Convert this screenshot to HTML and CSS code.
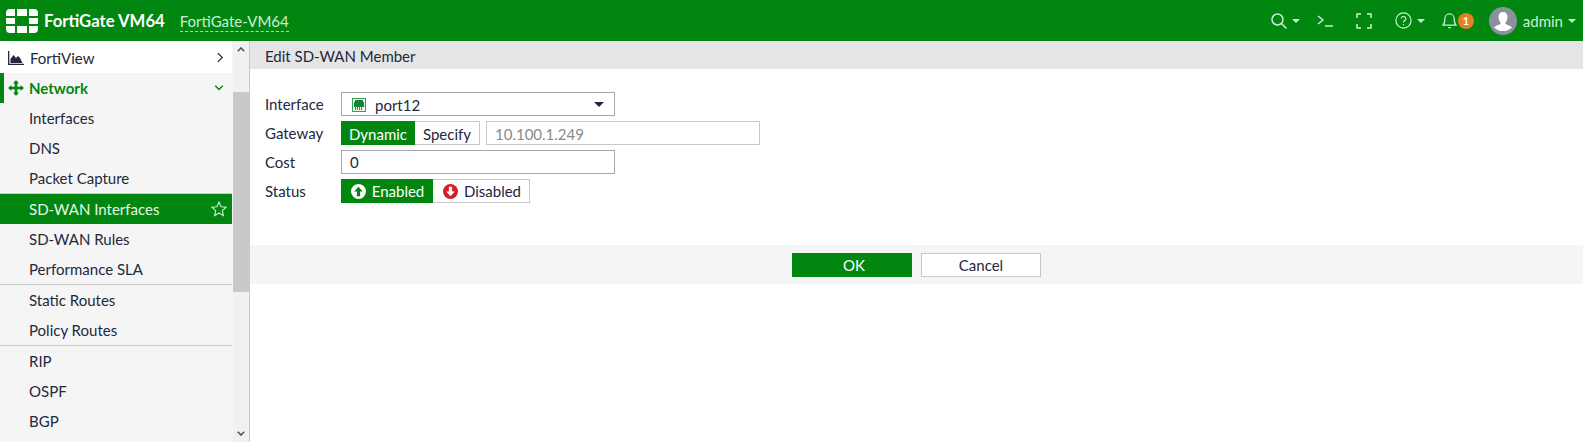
FILE: index.html
```html
<!DOCTYPE html>
<html lang="en">
<head>
<meta charset="utf-8">
<title>Edit SD-WAN Member</title>
<link rel="stylesheet" href="styles.css">
</head>
<body>
<header class="topbar">
  <svg class="logo" viewBox="0 0 32 24"><g fill="#fff"><path d="M0 7V4a4 4 0 0 1 4-4h5v7z"/><rect x="11" y="0" width="10" height="7"/><path d="M23 0h5a4 4 0 0 1 4 4v3h-9z"/><rect x="0" y="9" width="9" height="6"/><rect x="23" y="9" width="9" height="6"/><path d="M0 17h9v7H4a4 4 0 0 1-4-4z"/><rect x="11" y="17" width="10" height="7"/><path d="M23 17h9v3a4 4 0 0 1-4 4h-5z"/></g></svg>
  <span class="product">FortiGate VM64</span>
  <span class="hostname">FortiGate-VM64</span>
  <div class="tools">
    <svg class="tool search" viewBox="0 0 16 16"><circle cx="6.500" cy="6.500" r="5.500"/><path d="M10.500 10.500L15.500 15.500"/></svg>
    <i class="caret"></i>
    <svg class="tool prompt" viewBox="0 0 16 12"><path d="M1 1l5 4-5 4M8 11h8"/></svg>
    <svg class="tool full" viewBox="0 0 16 16"><path d="M1 5V1h4M11 1h4v4M15 11v4h-4M5 15H1v-4"/></svg>
    <svg class="tool help" viewBox="0 0 18 18"><circle cx="9" cy="9" r="8"/><path d="M6.600 7a2.400 2.400 0 1 1 3.600 2.100c-.8.500-1.200 1-1.200 1.900M9 12.600v1.400"/></svg>
    <i class="caret"></i>
    <svg class="tool bell" viewBox="0 0 16 18"><path d="M1 14c2-2 2-3.500 2-7a5 5 0 0 1 10 0c0 3.500 0 5 2 7zM6.500 16.500h3"/></svg>
    <span class="badge">1</span>
    <svg class="avatar" viewBox="0 0 28 28"><circle cx="14" cy="14" r="14" fill="#8a919c"/><path fill="#fff" d="M14 5c3 0 4.500 2 4.500 5 0 2.500-1 4.500-2 5.500v1.500c2 1 5 1.500 6.500 3.500a13 13 0 0 1-18 0c1.500-2 4.500-2.500 6.500-3.500v-1.500c-1-1-2-3-2-5.500 0-3 1.500-5 4.500-5z"/></svg>
    <span class="user">admin</span>
    <i class="caret"></i>
  </div>
</header>
<div class="shell">
  <nav class="sidebar">
    <div class="menu">
      <a class="item item-top">
        <svg class="ico" viewBox="0 0 16 14"><path d="M.7 0v13.300H16" fill="none" stroke="#23283c" stroke-width="1.300"/><path fill="#23283c" d="M2.500 12V8l3-4 2.500 3 2-2 2 2 2.500 5z"/></svg>
        <span class="grow">FortiView</span>
        <svg class="chev" viewBox="0 0 8 12"><path d="M1 1l5 5-5 5"/></svg>
      </a>
      <a class="item item-open">
        <svg class="ico" viewBox="0 0 16 16"><path fill="#01860f" d="M8 0l3 3.400H9.300v3.300h3.300V5l3.400 3-3.400 3V9.300H9.300v3.300H11L8 16l-3-3.400h1.700V9.300H3.400V11L0 8l3.400-3v1.700h3.300V3.400H5z"/></svg>
        <span class="grow">Network</span>
        <svg class="chev chev-down" viewBox="0 0 12 8"><path d="M1 1l5 5 5-5"/></svg>
      </a>
      <a class="item sub">Interfaces</a>
      <a class="item sub">DNS</a>
      <a class="item sub sep">Packet Capture</a>
      <a class="item sub active"><span class="grow">SD-WAN Interfaces</span>
        <svg class="star" viewBox="0 0 16 16"><path d="M8 1l2.100 4.700 5 .5-3.800 3.400 1.100 5L8 12l-4.400 2.600 1.100-5L.9 6.200l5-.5z"/></svg>
      </a>
      <a class="item sub">SD-WAN Rules</a>
      <a class="item sub sep">Performance SLA</a>
      <a class="item sub">Static Routes</a>
      <a class="item sub sep">Policy Routes</a>
      <a class="item sub">RIP</a>
      <a class="item sub">OSPF</a>
      <a class="item sub">BGP</a>
    </div>
    <div class="scrollbar">
      <svg class="arrow" viewBox="0 0 8 5"><path d="M.8 4.200L4 1l3.200 3.200"/></svg>
      <div class="track"><div class="thumb"></div></div>
      <svg class="arrow" viewBox="0 0 8 5"><path d="M.8.800L4 4l3.200-3.200"/></svg>
    </div>
  </nav>
  <main class="content">
    <h1 class="title">Edit SD-WAN Member</h1>
    <form class="form">
      <label class="lab">Interface</label>
      <div class="field select">
        <svg class="port" viewBox="0 0 14 14"><rect x=".5" y=".5" width="13" height="13" fill="#eef5e4" stroke="#2fa352"/><path fill="#17803a" d="M3 2h8v2h1v5H2V4h1z"/><path stroke="#5b7d3a" d="M3.500 8v4M5.500 8v4M7.500 8v4M9.500 8v4"/></svg>
        <span class="grow">port12</span>
        <i class="drop"></i>
      </div>
      <label class="lab">Gateway</label>
      <div class="inline">
        <div class="toggle">
          <span class="opt on dyn">Dynamic</span><span class="opt spec">Specify</span>
        </div>
        <div class="field ghost">10.100.1.249</div>
      </div>
      <label class="lab">Cost</label>
      <div class="field cost">0</div>
      <label class="lab">Status</label>
      <div class="toggle">
        <span class="opt on st-on"><svg class="stat" viewBox="0 0 14 14"><circle cx="7" cy="7" r="7" fill="#fff"/><path fill="#01860f" d="M7 2.500L11 7H8.500v4.500h-3V7H3z"/></svg>Enabled</span><span class="opt st-off"><svg class="stat" viewBox="0 0 14 14"><circle cx="7" cy="7" r="7" fill="#d32027"/><path fill="#fff" d="M7 11.500L3 7h2.500V2.500h3V7H11z"/></svg>Disabled</span>
      </div>
    </form>
    <div class="footer">
      <button class="btn primary" type="button">OK</button>
      <button class="btn" type="button">Cancel</button>
    </div>
  </main>
</div>
</body>
</html>
```
FILE: styles.css
```css
* { box-sizing: border-box; }
html, body { height: 100%; }
body { margin: 0; font: 15px/20px Lato, sans-serif; color: #23283c; background: #fff; overflow: hidden; display: flex; flex-direction: column; }
.grow { flex: 1; }
.topbar { height: 41px; background: #01860f; display: flex; align-items: center; padding-left: 6px; flex: none; }
.logo { width: 32px; height: 24px; margin-right: 6px; }
.product { color: #fff; font-weight: 700; font-size: 16.7px; margin-right: 15px; }
.hostname { color: #cdeed6; font-size: 15px; border-bottom: 1px dashed #a5dcb5; line-height: 19px; margin-top: 2px; }
.tools { margin-left: auto; display: flex; align-items: center; padding-right: 7px; }
.tool { fill: none; stroke: #c9f0d2; stroke-width: 1.500; }
.search { width: 16px; height: 16px; }
.caret { width: 0; height: 0; border: 4px solid transparent; border-top-color: #cdeed6; border-bottom: 0; margin-left: 5px; }
.prompt { width: 16px; height: 12px; margin-left: 17px; }
.full { width: 16px; height: 16px; margin-left: 23px; }
.help { width: 17px; height: 17px; margin-left: 23px; stroke-width: 1.300; }
.bell { width: 15px; height: 17px; margin-left: 17px; stroke-width: 1.300; }
.badge { width: 16px; height: 16px; border-radius: 50%; background: #e58025; color: #fff; font-size: 11px; font-weight: 700; line-height: 16px; text-align: center; margin-left: 1px; }
.avatar { width: 28px; height: 28px; margin-left: 15px; }
.user { color: #cdeed6; font-size: 15px; margin-left: 6px; }
.shell { flex: 1; display: flex; min-height: 0; }
.sidebar { width: 250px; flex: none; display: flex; background: #f5f5f5; border-right: 1px solid #c8c8c8; }
.menu { width: 232px; flex: none; }
.item { display: flex; align-items: center; height: 30px; padding: 0 8px 0 29px; }
.item-top { height: 32px; background: #fff; padding: 1px 8px 0; }
.item-open { padding-left: 8px; color: #01860f; font-weight: 700; box-shadow: inset 4px 0 0 #01860f; }
.sep { height: 31px; border-bottom: 1px solid #c8c8c8; }
.ico { width: 16px; height: 14px; margin-right: 6px; flex: none; }
.item-open .ico { height: 16px; margin-right: 5px; }
.chev { fill: none; stroke: #23283c; stroke-width: 1.400; width: 7px; height: 11px; }
.chev-down { stroke: #01860f; stroke-width: 1.800; width: 10px; height: 6px; }
.active { background: #01860f; color: #e6f7ea; }
.star { width: 16px; height: 16px; fill: none; stroke: #c9f0d2; stroke-width: 1.100; margin-right: -3px; }
.scrollbar { width: 16px; margin-left: 1px; background: #f1f1f1; display: flex; flex-direction: column; align-items: center; }
.arrow { width: 8px; height: 5px; margin: 6px 0; fill: none; stroke: #505050; stroke-width: 1.600; flex: none; }
.track { flex: 1; width: 100%; padding-top: 34px; }
.thumb { height: 200px; background: #c8c8c8; }
.content { flex: 1; min-width: 0; }
.title { margin: 0; height: 28px; background: #e5e5e5; font-size: 15px; font-weight: 400; line-height: 30px; padding-left: 15px; }
.form { display: grid; grid-template-columns: 76px 1fr; row-gap: 5px; padding: 23px 0 0 15px; align-items: center; justify-items: start; height: 176px; align-content: start; }
.lab { height: 24px; line-height: 25px; }
.field { width: 274px; height: 24px; border: 1px solid #a8a8a8; padding: 1px 0 0 8px; display: flex; align-items: center; background: #fff; }
.cost { padding-top: 0; }
.select { padding-left: 10px; padding-right: 10px; }
.port { width: 14px; height: 14px; margin-right: 9px; }
.drop { width: 0; height: 0; border: 5px solid transparent; border-top-color: #23283c; border-bottom: 0; }
.inline { display: flex; gap: 6px; }
.ghost { border-color: #c8c8c8; color: #8a8a8a; }
.toggle { display: flex; height: 24px; }
.opt { display: flex; align-items: center; justify-content: center; height: 24px; border: 1px solid #c8c8c8; border-left: 0; padding: 1px 0 0; }
.on { background: #01860f; color: #fff; border: 0; }
.dyn { width: 74px; }
.spec { width: 65px; }
.st-on { width: 92px; padding: 0 0 0 1px; }
.st-off { width: 97px; padding: 0 0 0 2px; }
.stat { width: 15px; height: 15px; margin-right: 6px; }
.footer { height: 39px; background: #f5f5f5; display: flex; align-items: center; justify-content: center; gap: 9px; }
.btn { width: 120px; height: 24px; font: 15px Lato, sans-serif; color: #23283c; background: #fff; border: 1px solid #c8c8c8; padding: 0; }
.primary { background: #01860f; border-color: #01860f; color: #fff; padding-left: 4px; }
```
